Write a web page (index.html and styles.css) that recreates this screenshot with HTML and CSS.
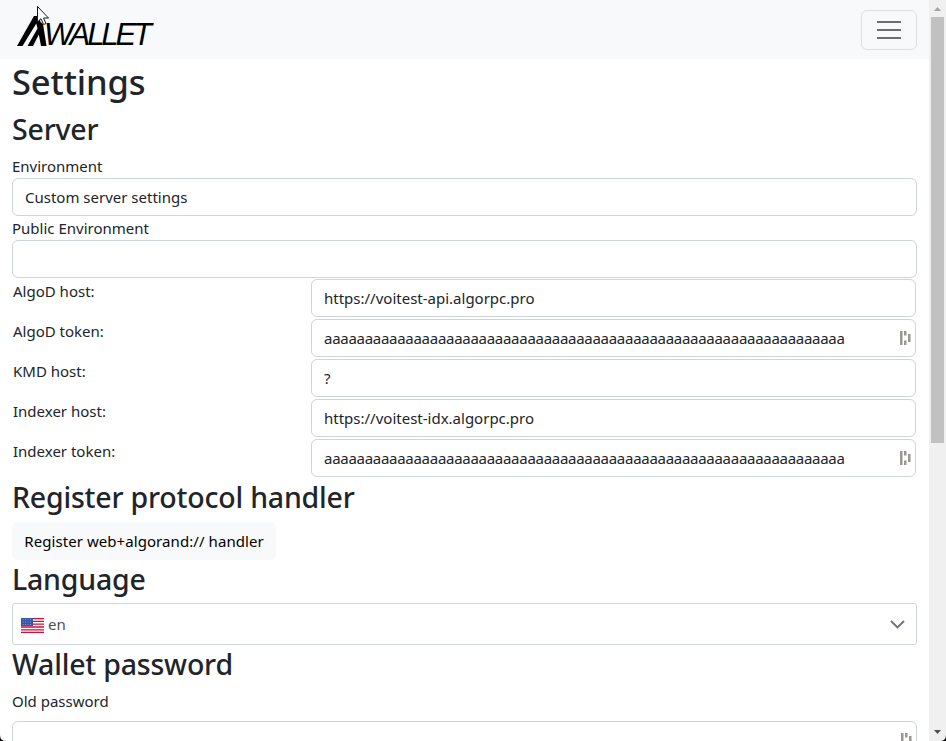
FILE: index.html
```html
<!DOCTYPE html>
<html lang="en">
<head>
<meta charset="utf-8">
<title>AWallet settings</title>
<link rel="stylesheet" href="styles.css">
</head>
<body>
<div class="window">
  <div class="page">
    <header class="navbar">
      <div class="brand">
        <svg class="brand-mark" width="32" height="32" viewBox="0 0 32 32"><path d="M1 32L18 2h5l1.500 6L27 10l3.500 22H25l-2.200-11.500L17 32h-5.500L21.500 14.500l-1.200-5L6.500 32z"/></svg>
        <span class="brand-name">WALLET</span>
      </div>
      <button class="toggler" aria-label="Menu"><svg width="30" height="30" viewBox="0 0 30 30"><path d="M3 7h24M3 15h24M3 23h24" stroke="#6c6d6f" stroke-width="2"/></svg></button>
    </header>
    <main class="content">
      <h1>Settings</h1>
      <h2>Server</h2>
      <label>Environment</label>
      <div class="field"><span>Custom server settings</span></div>
      <label>Public Environment</label>
      <div class="field"></div>
      <div class="grid">
        <div class="name">AlgoD host:</div><div class="field"><span>https://voitest-api.algorpc.pro</span></div>
        <div class="name">AlgoD token:</div><div class="field"><span class="token">aaaaaaaaaaaaaaaaaaaaaaaaaaaaaaaaaaaaaaaaaaaaaaaaaaaaaaaaaaaaaaaa</span><svg class="key" width="12" height="16"><path d="M0 1h2.500v14H0zM4 1h2.500v4.500H4zM4 10.500h2.500V15H4zM8 4h2.500v8H8z"/></svg></div>
        <div class="name">KMD host:</div><div class="field"><span>?</span></div>
        <div class="name">Indexer host:</div><div class="field"><span>https://voitest-idx.algorpc.pro</span></div>
        <div class="name">Indexer token:</div><div class="field"><span class="token">aaaaaaaaaaaaaaaaaaaaaaaaaaaaaaaaaaaaaaaaaaaaaaaaaaaaaaaaaaaaaaaa</span><svg class="key" width="12" height="16"><path d="M0 1h2.500v14H0zM4 1h2.500v4.500H4zM4 10.500h2.500V15H4zM8 4h2.500v8H8z"/></svg></div>
      </div>
      <h2>Register protocol handler</h2>
      <button class="btn">Register web+algorand:// handler</button>
      <h2>Language</h2>
      <div class="select">
        <svg class="flag" width="23" height="15" viewBox="0 0 23 15"><path fill="#fff" d="M0 0h23v15H0z"/><path d="M0 .6h23M0 3.400h23M0 6.200h23M0 9h23M0 11.800h23M0 14.500h23" stroke="#d80d35" stroke-width="1.300"/><path fill="#3655ad" d="M0 0h12v8H0z"/><path d="M1.500 1.500h10M1.500 4h10M1.500 6.500h10" stroke="#8199d0" stroke-dasharray="1 1.500"/></svg>
        <span>en</span>
        <svg class="chevron" width="15" height="9"><path d="M1 1l6.500 6.500L14 1" fill="none" stroke="#6c757d" stroke-width="1.900"/></svg>
      </div>
      <h2>Wallet password</h2>
      <label class="last">Old password</label>
      <div class="field"><svg class="key" width="12" height="16"><path d="M0 1h2.500v14H0zM4 1h2.500v4.500H4zM4 10.500h2.500V15H4zM8 4h2.500v8H8z"/></svg></div>
    </main>
  </div>
  <div class="scrollbar">
    <svg class="arrow" width="17" height="17"><path d="M5 11l3.500-4L12 11z" fill="#a3a3a3"/></svg>
    <div class="thumb"></div>
    <svg class="arrow" width="17" height="17"><path d="M5 6l3.500 4L12 6z" fill="#505050"/></svg>
  </div>
  <svg class="corner left" width="6" height="6"><path d="M0 0Q0 6 6 6H0z"/></svg>
  <svg class="corner right" width="6" height="6"><path d="M6 0Q6 6 0 6H6z"/></svg>
  <svg class="cursor" width="13" height="20" viewBox="0 0 13 20"><path d="M.5.5v15.500l3.500-3.300 2.600 5.800 2.400-1-2.500-5.500h5z" fill="#fff" stroke="#161622"/></svg>
</div>
</body>
</html>
```
FILE: styles.css
```css
* { box-sizing: border-box; }
body {
  margin: 0;
  overflow: hidden;
  background: #fff;
  color: #212529;
  font: 15px/24px "Noto Sans", sans-serif;
}
.window { position: relative; display: flex; height: 741px; overflow: hidden; }
.page { flex: 1; min-width: 0; }
.navbar {
  display: flex;
  align-items: flex-start;
  justify-content: space-between;
  height: 59px;
  padding: 10px 12px 0 16px;
  background: #f8f9fb;
}
.brand { display: flex; color: #000; padding-top: 4px; }
.brand-mark { flex: none; }
.brand-name {
  margin: 5px 0 0 -4px;
  font: italic 31px/32px "Liberation Sans", sans-serif;
  letter-spacing: -3.100px;
}
.toggler {
  display: flex;
  align-items: center;
  justify-content: center;
  width: 56px;
  height: 40px;
  padding: 0;
  border: 1px solid #dedfe1;
  border-radius: 6px;
  background: transparent;
}
.content { padding: 0 12px; }
h1, h2 { margin: 0 0 8px; font-weight: 500; white-space: nowrap; }
h1 { height: 43.400px; font-size: 34.500px; line-height: 46px; letter-spacing: -0.100px; }
h2 { height: 35.600px; font-size: 28.500px; line-height: 39px; letter-spacing: -0.200px; }
label { display: block; height: 24px; }
.last { margin-bottom: 8px; }
.field {
  display: flex;
  align-items: center;
  height: 38px;
  padding: 0 12px;
  border: 1px solid #ced4da;
  border-radius: 6px;
  background: #fff;
  white-space: nowrap;
}
.key { flex: none; margin: 0 -9px 0 auto; fill: #999590; }
.grid {
  display: grid;
  grid-template-columns: 296px 1fr;
  gap: 2px;
  padding: 1px;
}
.token { letter-spacing: -0.280px; }
.btn {
  display: block;
  height: 38px;
  width: 264px;
  margin: 0;
  padding: 0;
  border: 0;
  border-radius: 6px;
  background: #f8f9fb;
  color: #000;
  font: inherit;
  letter-spacing: 0.070px;
}
.select {
  display: flex;
  align-items: center;
  height: 42px;
  padding: 0 11px 0 8px;
  border: 1px solid #ced4da;
  border-radius: 3px;
  color: #495057;
}
.flag { margin: 3px 4px 0 0; }
.chevron { margin-left: auto; }
.scrollbar { display: flex; flex-direction: column; width: 17px; background: #f0f0f0; }
.arrow { flex: none; }
.arrow:last-of-type { margin-top: auto; }
.thumb { height: 426px; margin: 0 2px; background: #c1c1c1; }
.corner { position: absolute; bottom: 0; }
.left { left: 0; }
.right { right: 0; }
.cursor { position: absolute; left: 37px; top: 6px; }
```
